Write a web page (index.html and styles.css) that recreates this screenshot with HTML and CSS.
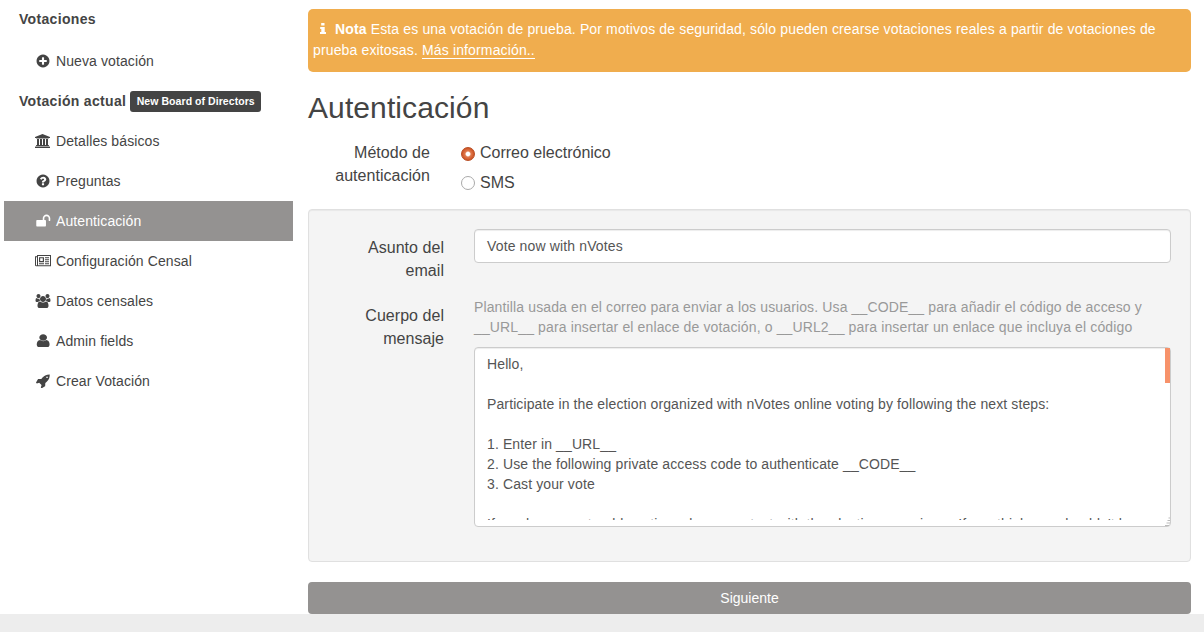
FILE: index.html
```html
<!DOCTYPE html>
<html lang="es">
<head>
<meta charset="utf-8">
<title>Autenticación</title>
<link rel="stylesheet" href="styles.css">
</head>
<body>
<div class="page">
  <nav class="sidebar">
    <h2 class="group"><span>Votaciones</span></h2>
    <a class="item first"><svg class="icon" viewBox="64 64 1664 1664"><path d="M1344 960V832q0-26-19-45t-45-19h-256V512q0-26-19-45t-45-19H832q-26 0-45 19t-19 45v256H512q-26 0-45 19t-19 45v128q0 26 19 45t45 19h256v256q0 26 19 45t45 19h128q26 0 45-19t19-45v-256h256q26 0 45-19t19-45zm320-64q0 209-103 385.500T1281.500 1561 896 1664t-385.500-103T231 1281.500 128 896t103-385.500T510.500 231 896 128t385.500 103T1561 510.500 1664 896z"/></svg><span>Nueva votación</span></a>
    <h2 class="group current"><span>Votación actual</span><span class="badge">New Board of Directors</span></h2>
    <a class="item"><svg class="icon" viewBox="0 0 2048 1792"><path d="M960 0l960 384v128h-128q0 26-20.500 45t-48.500 19H197q-28 0-48.500-19T128 512H0V384zM256 640h256v768h128V640h256v768h128V640h256v768h128V640h256v768h59q28 0 48.500 19t20.500 45v64H128v-64q0-26 20.500-45t48.500-19h59V640zm1595 960q28 0 48.500 19t20.500 45v128H0v-128q0-26 20.500-45t48.500-19h1782z"/></svg><span>Detalles básicos</span></a>
    <a class="item"><svg class="icon" viewBox="64 64 1664 1664"><path d="M1024 1376v-192q0-14-9-23t-23-9H800q-14 0-23 9t-9 23v192q0 14 9 23t23 9h192q14 0 23-9t9-23zm256-672q0-88-55.500-163t-138.500-116-170-41q-243 0-371 213-15 24 8 42l132 100q7 6 19 6 16 0 25-12 53-68 86-92 34-24 86-24 48 0 85.500 26t37.500 59q0 38-20 61t-68 45q-63 28-115.500 86.500T768 1020v36q0 14 9 23t23 9h192q14 0 23-9t9-23q0-19 21.500-49.500T1100 957q32-18 49-28.500t46-35 44.500-48 28-60.500 12.500-81zm384 192q0 209-103 385.500T1281.500 1561 896 1664t-385.500-103T231 1281.500 128 896t103-385.500T510.500 231 896 128t385.500 103T1561 510.500 1664 896z"/></svg><span>Preguntas</span></a>
    <a class="item active"><svg class="icon" viewBox="0 64 1728 1664"><path d="M1728 576v256q0 26-19 45t-45 19h-64q-26 0-45-19t-19-45V576q0-106-75-181t-181-75-181 75-75 181v192h96q40 0 68 28t28 68v576q0 40-28 68t-68 28H160q-40 0-68-28t-28-68V864q0-40 28-68t68-28h672V576q0-185 131.500-316.500T1280 128t316.500 131.500T1728 576z"/></svg><span>Autenticación</span></a>
    <a class="item"><svg class="icon news" viewBox="0 0 16 12"><path fill-rule="evenodd" d="M2 0h14v11.200H1.300Q0 11.200 0 10V1.300h2zm1 1v9.200h12V1zM1 2.300V10q0 .4.400.4T2 10V2.300zM4 2.200h5v5H4zm1.200 1.100v2.800h2.600V3.300zM10 2.200h4v1h-4zm0 2h4v1h-4zm0 2h4v1h-4zm-6 2h5v1H4zm6 0h4v1h-4z"/></svg><span>Configuración Censal</span></a>
    <a class="item"><svg class="icon" viewBox="0 0 1920 1792"><path d="M593 896q-162 5-265 128H194q-82 0-138-40.500T0 865q0-353 124-353 6 0 43.500 21t97.500 42.500T384 597q67 0 133-23-5 37-5 66 0 139 81 256zm1071 637q0 120-73 189.500t-194 69.500H523q-121 0-194-69.500T256 1533q0-53 3.500-103.500t14-109T300 1212t43-97.500 62-81 85.500-53.500T602 960q10 0 43 21.500t73 48 107 48T960 1099t135-21.500 107-48 73-48 43-21.500q61 0 111.500 20t85.500 53.500 62 81 43 97.500 26.500 108.500 14 109 3.500 103.500zM640 256q0 106-75 181t-181 75-181-75-75-181 75-181T384 0t181 75 75 181zm704 384q0 159-112.500 271.500T960 1024 688.500 911.500 576 640t112.500-271.500T960 256t271.500 112.500T1344 640zm576 225q0 78-56 118.500t-138 40.500h-134q-103-123-265-128 81-117 81-256 0-29-5-66 66 23 133 23 59 0 119-21.500t97.500-42.500 43.500-21q124 0 124 353zm-128-609q0 106-75 181t-181 75-181-75-75-181 75-181 181-75 181 75 75 181z"/></svg><span>Datos censales</span></a>
    <a class="item"><svg class="icon" viewBox="80 100 1600 1680" preserveAspectRatio="none"><path d="M1536 1399q0 109-62.500 187t-150.500 78H469q-88 0-150.500-78T256 1399q0-85 8.500-160.500t31.500-152 58.500-131 94-89T583 832q131 128 313 128t313-128q76 0 134.500 34.500t94 89 58.500 131 31.500 152 8.500 160.500zm-256-887q0 159-112.500 271.500T896 896 624.500 783.500 512 512t112.500-271.500T896 128t271.500 112.500T1280 512z"/></svg><span>Admin fields</span></a>
    <a class="item"><svg class="icon" viewBox="0 64 1728 1664"><path d="M1440 448q0-40-28-68t-68-28-68 28-28 68 28 68 68 28 68-28 28-68zm224-288q0 249-75.500 430.500T1335 951q-81 80-195 176l-20 379q-2 16-16 26l-384 224q-7 4-16 4-12 0-23-9l-64-64q-13-14-8-32l85-276-281-281-276 85q-3 1-9 1-14 0-23-9l-64-64q-17-19-5-39l224-384q10-14 26-16l379-20q96-114 176-195 188-187 358-258t431-71q14 0 24 9.500t10 22.500z"/></svg><span>Crear Votación</span></a>
  </nav>
  <main class="main">
    <div class="notice"><svg class="info" viewBox="0 0 6 11"><path d="M1.200 0h3.300v2.600H1.200zM.2 4h4.500v5H6v2H0V9h1.300V6H.2z"/></svg><b>Nota</b> Esta es una votación de prueba. Por motivos de seguridad, sólo pueden crearse votaciones reales a partir de votaciones de<br>prueba exitosas. <a class="more">Más información..</a></div>
    <h1 class="title">Autenticación</h1>
    <div class="method">
      <div class="label">Método de<br>autenticación</div>
      <div class="options">
        <div class="option"><span class="radio checked"></span><span>Correo electrónico</span></div>
        <div class="option"><span class="radio"></span><span>SMS</span></div>
      </div>
    </div>
    <section class="well">
      <div class="label">Asunto del<br>email</div>
      <div class="input">Vote now with nVotes</div>
      <div class="label">Cuerpo del<br>mensaje</div>
      <div class="field">
        <p class="help">Plantilla usada en el correo para enviar a los usuarios. Usa __CODE__ para añadir el código de acceso y<br>__URL__ para insertar el enlace de votación, o __URL2__ para insertar un enlace que incluya el código</p>
        <div class="textarea"><div class="message">Hello,

Participate in the election organized with nVotes online voting by following the next steps:

1. Enter in __URL__
2. Use the following private access code to authenticate __CODE__
3. Cast your vote

If you have any trouble voting, please contact with the election organizers. If you think you shouldn't have</div><span class="thumb"></span><svg class="grip" viewBox="0 0 5 9"><path d="M3.500 1H5M2.500 3.500H5M1.500 6H5M0 8.500h4"/></svg></div>
      </div>
    </section>
    <div class="next">Siguiente</div>
  </main>
</div>
</body>
</html>
```

FILE: styles.css
```css
* { box-sizing: border-box; }
body {
  margin: 0;
  height: 632px;
  overflow: hidden;
  background: #ededed;
  color: #444;
  font: 14px/20px "Liberation Sans", Arial, sans-serif;
}
.page { display: flex; height: 614px; background: #fff; }
.sidebar { width: 293px; padding: 9px 0 0 4px; letter-spacing: .1px; }
.group {
  display: flex;
  align-items: center;
  height: 20px;
  margin: 0;
  padding-left: 15px;
  font-size: 14px;
  line-height: 20px;
  letter-spacing: .32px;
}
.group.current { gap: 4px; }
.item {
  display: flex;
  align-items: center;
  gap: 5px;
  height: 40px;
  padding-left: 31px;
}
.item.first { margin: 12px 0 10px; }
.group.current + .item { margin-top: 10px; }
.item.active { background: #949291; color: #fff; }
.icon { width: 16px; height: 14px; fill: currentColor; }
.icon.news { height: 12px; }
.badge {
  width: 131px;
  height: 21px;
  margin-top: 1px;
  border-radius: 3px;
  background: #444;
  color: #fff;
  font-size: 10.5px;
  line-height: 21px;
  letter-spacing: .06px;
  text-align: center;
}
.main { width: 883px; margin-left: 15px; padding-top: 9px; }
.notice {
  height: 63px;
  padding: 10px 5px;
  border-radius: 5px;
  background: #f0ad4e;
  color: #fff;
  font-size: 14px;
  line-height: 21px;
  letter-spacing: .14px;
  white-space: nowrap;
}
.info { width: 6px; height: 11px; margin: 0 9px 0 7px; fill: #fff; }
.more { border-bottom: 1px solid #fff; }
.title {
  height: 34px;
  margin: 19px 0 0;
  font-size: 30px;
  font-weight: 400;
  line-height: 34px;
  letter-spacing: .1px;
}
.method { display: flex; gap: 30px; height: 84px; padding-top: 16px; font-size: 16px; }
.label { width: 122px; text-align: right; font-size: 16px; line-height: 23px; letter-spacing: .04px; }
.option { display: flex; align-items: center; gap: 5px; height: 23px; margin-bottom: 7px; }
.radio {
  width: 14px;
  height: 14px;
  margin: 1px 0 0 1px;
  border: 1px solid #aaa;
  border-radius: 50%;
  background: #fff;
}
.radio.checked {
  margin-top: 3px;
  border-color: #b84c22;
  background: radial-gradient(circle, #fff 0 1.8px, #e07a4e 3px, #cf5526 6px);
}
.well {
  display: grid;
  grid-template-columns: 115px 697px;
  grid-template-rows: 68px 1fr;
  column-gap: 30px;
  height: 353px;
  padding: 19px 0 0 20px;
  border: 1px solid #e0e0e0;
  border-radius: 4px;
  background: #f4f4f4;
  box-shadow: inset 0 1px 1px rgba(0,0,0,.05);
}
.well .label { width: 115px; padding-top: 7px; }
.input {
  height: 34px;
  padding: 6px 12px;
  border: 1px solid #ccc;
  border-radius: 4px;
  background: #fff;
  box-shadow: inset 0 1px 1px rgba(0,0,0,.075);
  color: #555;
  letter-spacing: .14px;
}
.help { margin: 0 0 10px; color: #999; letter-spacing: .13px; white-space: nowrap; }
.textarea {
  position: relative;
  height: 180px;
  padding: 6px 12px;
  border: 1px solid #ccc;
  border-radius: 4px;
  background: #fff;
  box-shadow: inset 0 1px 1px rgba(0,0,0,.075);
  color: #555;
  letter-spacing: .115px;
}
.message { height: 166px; overflow: hidden; white-space: pre; }
.thumb { position: absolute; top: 0; right: 0; width: 5px; height: 35px; background: #f7926a; }
.grip { position: absolute; right: 0; bottom: 0; width: 5px; height: 9px; stroke: #bbb; }
.next {
  height: 32px;
  margin-top: 20px;
  border-radius: 4px;
  background: #949291;
  color: #fff;
  line-height: 32px;
  text-align: center;
}
```
